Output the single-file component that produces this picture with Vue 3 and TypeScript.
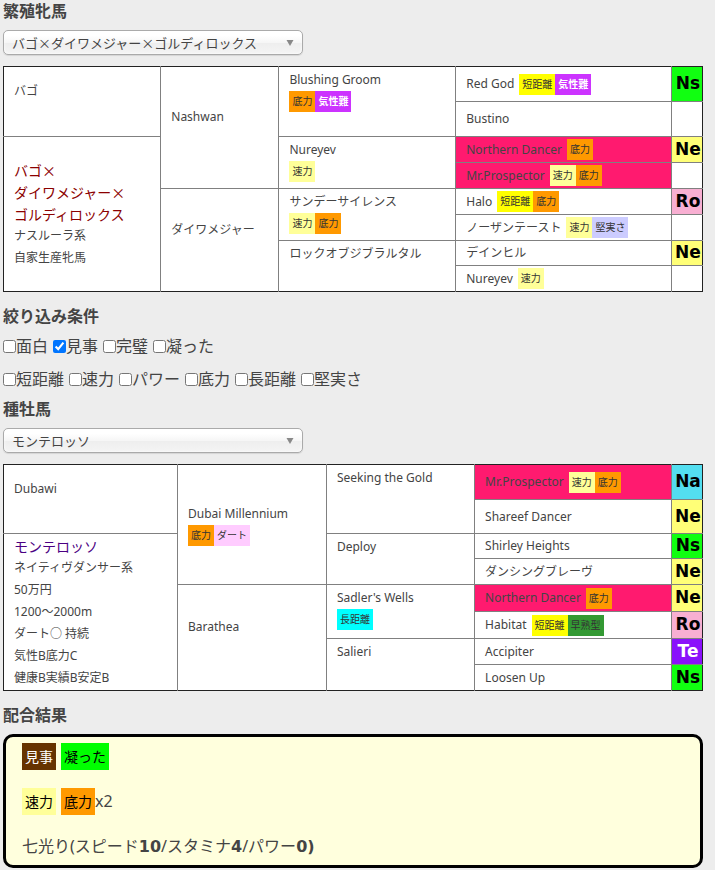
<script setup lang="ts">
import { ref } from 'vue'

interface Horse {
  name: string
  tags?: string[]
  cross?: boolean
}

interface Ancestor extends Horse {
  line?: string
}

interface Pedigree {
  label: string
  kind: 'mare' | 'stallion'
  sire: string
  title: string[]
  details: string[]
  second: Horse[]
  third: Horse[]
  fourth: Ancestor[]
}

const tagClass: Record<string, string> = {
  底力: 'stamina',
  気性難: 'temper',
  速力: 'speed',
  短距離: 'sprint',
  堅実さ: 'steady',
  ダート: 'dirt',
  長距離: 'long',
  早熟型: 'early',
  見事: 'superb',
  凝った: 'elaborate',
}

const mareName = 'バゴ×ダイワメジャー×ゴルディロックス'
const stallionName = 'モンテロッソ'
const mare = ref(mareName)
const stallion = ref(stallionName)

const marePedigree: Pedigree = {
  label: '繁殖牝馬の血統表',
  kind: 'mare',
  sire: 'バゴ',
  title: ['バゴ×', 'ダイワメジャー×', 'ゴルディロックス'],
  details: ['ナスルーラ系', '自家生産牝馬'],
  second: [{ name: 'Nashwan' }, { name: 'ダイワメジャー' }],
  third: [
    { name: 'Blushing Groom', tags: ['底力', '気性難'] },
    { name: 'Nureyev', tags: ['速力'] },
    { name: 'サンデーサイレンス', tags: ['速力', '底力'] },
    { name: 'ロックオブジブラルタル' },
  ],
  fourth: [
    { name: 'Red God', tags: ['短距離', '気性難'], line: 'Ns' },
    { name: 'Bustino' },
    { name: 'Northern Dancer', tags: ['底力'], cross: true, line: 'Ne' },
    { name: 'Mr.Prospector', tags: ['速力', '底力'], cross: true },
    { name: 'Halo', tags: ['短距離', '底力'], line: 'Ro' },
    { name: 'ノーザンテースト', tags: ['速力', '堅実さ'] },
    { name: 'デインヒル', line: 'Ne' },
    { name: 'Nureyev', tags: ['速力'] },
  ],
}

const stallionPedigree: Pedigree = {
  label: '種牡馬の血統表',
  kind: 'stallion',
  sire: 'Dubawi',
  title: ['モンテロッソ'],
  details: ['ネイティヴダンサー系', '50万円', '1200～2000m', 'ダート○ 持続', '気性B底力C', '健康B実績B安定B'],
  second: [{ name: 'Dubai Millennium', tags: ['底力', 'ダート'] }, { name: 'Barathea' }],
  third: [
    { name: 'Seeking the Gold' },
    { name: 'Deploy' },
    { name: "Sadler's Wells", tags: ['長距離'] },
    { name: 'Salieri' },
  ],
  fourth: [
    { name: 'Mr.Prospector', tags: ['速力', '底力'], cross: true, line: 'Na' },
    { name: 'Shareef Dancer', line: 'Ne' },
    { name: 'Shirley Heights', line: 'Ns' },
    { name: 'ダンシングブレーヴ', line: 'Ne' },
    { name: 'Northern Dancer', tags: ['底力'], cross: true, line: 'Ne' },
    { name: 'Habitat', tags: ['短距離', '早熟型'], line: 'Ro' },
    { name: 'Accipiter', line: 'Te' },
    { name: 'Loosen Up', line: 'Ns' },
  ],
}

const sections = [
  { heading: '繁殖牝馬', id: 'mare', model: mare, options: [mareName], pedigree: marePedigree },
  { heading: '種牡馬', id: 'stallion', model: stallion, options: [stallionName], pedigree: stallionPedigree },
]

const filterRows = [
  ['面白', '見事', '完璧', '凝った'],
  ['短距離', '速力', 'パワー', '底力', '長距離', '堅実さ'],
]
const filters = ref<string[]>(['見事'])
</script>

<template>
  <main class="page">
    <template v-for="(section, s) in sections" :key="section.id">
      <h2><label :for="section.id">{{ section.heading }}</label></h2>
      <div class="picker">
        <select :id="section.id" v-model="section.model.value">
          <option v-for="o in section.options" :key="o">{{ o }}</option>
        </select>
        <svg class="arrow" viewBox="0 0 8 6" aria-hidden="true"><path d="M0.5 0h7L4 6z" /></svg>
      </div>

      <table :class="['pedigree', section.pedigree.kind]" :aria-label="section.pedigree.label">
        <colgroup>
          <col class="c1" /><col class="c2" /><col class="c3" /><col class="c4" /><col class="c5" />
        </colgroup>
        <tbody>
          <tr v-for="(horse, i) in section.pedigree.fourth" :key="i" :class="{ tall: i < 2 }">
            <td v-if="i === 0" rowspan="2" class="edge">
              <div class="name">{{ section.pedigree.sire }}</div>
              <div class="tags"></div>
            </td>
            <td v-if="i === 2" rowspan="6" class="edge">
              <div v-for="t in section.pedigree.title" :key="t" class="name title">{{ t }}</div>
              <div v-for="d in section.pedigree.details" :key="d" class="name">{{ d }}</div>
            </td>
            <td v-if="i % 4 === 0" rowspan="4">
              <div class="name">{{ section.pedigree.second[i / 4].name }}</div>
              <div class="tags">
                <span v-for="t in section.pedigree.second[i / 4].tags" :key="t" :class="['tag', tagClass[t]]">{{ t }}</span>
              </div>
            </td>
            <td v-if="i % 2 === 0" rowspan="2" class="top">
              <div class="name">{{ section.pedigree.third[i / 2].name }}</div>
              <div class="tags">
                <span v-for="t in section.pedigree.third[i / 2].tags" :key="t" :class="['tag', tagClass[t]]">{{ t }}</span>
              </div>
            </td>
            <td :class="{ cross: horse.cross }">
              <div class="inline">
                <span class="name">{{ horse.name }}</span>
                <span v-if="horse.tags" class="tags">
                  <span v-for="t in horse.tags" :key="t" :class="['tag', tagClass[t]]">{{ t }}</span>
                </span>
              </div>
            </td>
            <td :class="['line', horse.line?.toLowerCase()]">{{ horse.line }}</td>
          </tr>
        </tbody>
      </table>

      <template v-if="s === 0">
        <h2>絞り込み条件</h2>
        <div class="filters">
          <div v-for="(row, r) in filterRows" :key="r" class="filter-row">
            <label v-for="f in row" :key="f"><input v-model="filters" type="checkbox" :value="f" />{{ f }}</label>
          </div>
        </div>
      </template>
    </template>

    <h2>配合結果</h2>
    <section class="result">
      <div class="result-row">
        <span class="tag superb">見事</span>
        <span class="tag elaborate">凝った</span>
      </div>
      <div class="result-row">
        <span class="tag speed">速力</span>
        <span><span class="tag stamina">底力</span>x2</span>
      </div>
      <p>七光り(スピード<b>10</b>/スタミナ<b>4</b>/パワー<b>0)</b></p>
    </section>
  </main>
</template>

<style>
body {
  background: #ededed;
}
</style>

<style scoped>
.page {
  padding: 0 12px 2px 3px;
  color: #444;
  font-family: 'Noto Sans', 'Noto Sans CJK JP', sans-serif;
  font-size: 16px;
  line-height: 22px;
}

h2 {
  margin: 0 0 8px;
  font-size: 16px;
  font-weight: bold;
}

.picker {
  display: grid;
  align-items: center;
  width: 300px;
  max-width: 100%;
  margin-bottom: 11px;
}

.picker select,
.arrow {
  grid-area: 1 / 1;
}

.picker select {
  width: 100%;
  height: 25px;
  padding: 0 24px 0 8px;
  border: 1px solid #aaa;
  border-radius: 5px;
  background: linear-gradient(#fff 20%, #f6f6f6 50%, #eee 52%, #f4f4f4 100%);
  box-shadow: 0 0 3px #fff inset, 0 1px 1px rgba(0, 0, 0, 0.1);
  appearance: none;
  color: #444;
  font: 13px 'Noto Sans CJK JP', sans-serif;
}

.arrow {
  justify-self: end;
  width: 8px;
  height: 6px;
  margin-right: 9px;
  fill: #888;
  pointer-events: none;
}

.pedigree {
  width: 100%;
  margin-bottom: 13px;
  border: 1px solid #222;
  border-collapse: collapse;
  table-layout: fixed;
  background: #fff;
  font-size: 12px;
}

.c5 { width: 31px; }
.mare .c1 { width: 22.5%; }
.mare .c2 { width: 16.9%; }
.mare .c3 { width: 25.3%; }
.stallion .c1 { width: 24.9%; }
.stallion .c2 { width: 21.3%; }
.stallion .c3 { width: 21.2%; }

tr {
  height: 26px;
}

tr.tall {
  height: 35px;
}

.mare tr:nth-child(7),
.stallion tr:nth-child(3) {
  height: 25px;
}

.stallion tr:nth-child(2) {
  height: 34px;
}

.stallion tr:nth-child(5),
.stallion tr:nth-child(6) {
  height: 27px;
}

/* Inner rules sit on the top and left of each cell, so the table keeps its own outer border. */
td {
  padding: 0 0 0 10px;
  border-top: 1px solid #808080;
  border-left: 1px solid #808080;
  vertical-align: middle;
}

tr:first-child td { border-top: none; }
td.edge { border-left: none; }

td.top {
  padding-top: 2px;
  vertical-align: top;
}

.name {
  line-height: 22px;
  white-space: nowrap;
}

.title {
  font-family: 'Noto Sans CJK JP', sans-serif;
  font-size: 14px;
}

.mare .title { color: #8b0000; }
.stallion .title { color: #4b0082; }

.tags {
  display: flex;
  min-height: 21px;
}

.inline {
  display: flex;
  align-items: center;
  gap: 5px;
  height: 22px;
}

.tag {
  display: inline-block;
  padding: 3px;
  color: #333;
  font-size: 10px;
  line-height: 15px;
  white-space: nowrap;
}

.stamina { background: #f90; }
.temper { background: #c3f; color: #fff; font-weight: bold; }
.speed { background: #ff9; }
.sprint { background: #ff0; }
.steady { background: #ccf; }
.dirt { background: #fcf; }
.long { background: #0ff; }
.early { background: #393; }

td.cross {
  background: #ff1a6f;
}

td.line {
  padding: 0 0 2px 2px;
  color: #000;
  font-family: 'DejaVu Sans', sans-serif;
  font-size: 17px;
  font-weight: bold;
  line-height: 22px;
  text-align: center;
}

td.ns { background: #1f1; }
td.ne { background: #ff7; }
td.ro { background: #f8afd2; }
td.na { background: #53def0; }
td.te { background: #8a11fb; color: #fff; }

.filters {
  display: grid;
  gap: 11px;
  margin-bottom: 8px;
}

.filter-row {
  display: flex;
  flex-wrap: wrap;
  gap: 0 5px;
}

.filter-row label {
  display: flex;
  align-items: center;
}

.filter-row input {
  width: 13px;
  height: 13px;
  margin: 0;
}

.result {
  display: grid;
  gap: 18px;
  padding: 6px 16px 5px;
  border: 3px solid #000;
  border-radius: 10px;
  background: #ffd;
}

.result-row {
  display: flex;
  align-items: center;
  gap: 5px;
}

.result .tag {
  color: #000;
  font-size: 14px;
  line-height: 21px;
}

.superb { background: #630; }
.result .superb { color: #fff; }
.elaborate { background: #0f0; }

.result p {
  margin: 0;
  line-height: 27px;
}

.result b {
  font-family: 'DejaVu Sans', sans-serif;
}
</style>
